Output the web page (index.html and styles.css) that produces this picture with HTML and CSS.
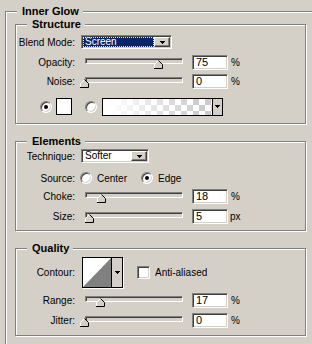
FILE: index.html
```html
<!DOCTYPE html>
<html>
<head>
    <meta charset="utf-8">
    <title>Inner Glow</title>
    <link rel="stylesheet" href="styles.css">
</head>
<body>
    <div class="outer">
        <div class="title">Inner Glow</div>

        <!-- Structure -->
        <div class="group structure">
            <div class="title">Structure</div>
            <div class="row row-blend">
                <span class="label">Blend Mode:</span>
                <div class="select select-blend">
                    <span class="value selected"><span class="focus">Screen</span></span>
                    <span class="btn"><svg width="5" height="3"><rect x="0" y="0" width="5" height="1"/><rect x="1" y="1" width="3" height="1"/><rect x="2" y="2" width="1" height="1"/></svg></span>
                </div>
            </div>
            <div class="row row-field r-opacity">
                <span class="label">Opacity:</span>
                <div class="slider">
                    <svg class="thumb" style="left:68px" width="9" height="9"><path d="M0.5 8.5V4.5L4.5 0.5L8.5 4.5V8.5Z" fill="#d4d0c8"/><path d="M0.5 8.5V4.5L4.5 0.5" stroke="#fff" fill="none"/><path d="M4.5 0.5L8.5 4.5V8.5H0" stroke="#000" fill="none"/></svg>
                </div>
                <div class="input">75</div><span class="unit">%</span>
            </div>
            <div class="row row-field r-noise">
                <span class="label">Noise:</span>
                <div class="slider">
                    <svg class="thumb" style="left:-6px" width="9" height="9"><path d="M0.5 8.5V4.5L4.5 0.5L8.5 4.5V8.5Z" fill="#d4d0c8"/><path d="M0.5 8.5V4.5L4.5 0.5" stroke="#fff" fill="none"/><path d="M4.5 0.5L8.5 4.5V8.5H0" stroke="#000" fill="none"/></svg>
                </div>
                <div class="input">0</div><span class="unit">%</span>
            </div>
            <div class="row row-color">
                <span class="radio checked first"></span>
                <span class="swatch"></span>
                <span class="radio second"></span>
                <div class="gradient">
                    <span class="preview"></span>
                    <span class="drop"><svg width="5" height="3"><rect x="0" y="0" width="5" height="1"/><rect x="1" y="1" width="3" height="1"/><rect x="2" y="2" width="1" height="1"/></svg></span>
                </div>
            </div>
        </div>

        <!-- Elements -->
        <div class="group elements">
            <div class="title">Elements</div>
            <div class="row row-blend r-technique">
                <span class="label">Technique:</span>
                <div class="select select-technique">
                    <span class="value">Softer</span>
                    <span class="btn"><svg width="5" height="3"><rect x="0" y="0" width="5" height="1"/><rect x="1" y="1" width="3" height="1"/><rect x="2" y="2" width="1" height="1"/></svg></span>
                </div>
            </div>
            <div class="row r-source">
                <span class="label">Source:</span>
                <span class="radio src-center"></span><span class="opt">Center</span>
                <span class="radio checked src-edge"></span><span class="opt">Edge</span>
            </div>
            <div class="row row-field r-choke">
                <span class="label">Choke:</span>
                <div class="slider">
                    <svg class="thumb" style="left:11px" width="9" height="9"><path d="M0.5 8.5V4.5L4.5 0.5L8.5 4.5V8.5Z" fill="#d4d0c8"/><path d="M0.5 8.5V4.5L4.5 0.5" stroke="#fff" fill="none"/><path d="M4.5 0.5L8.5 4.5V8.5H0" stroke="#000" fill="none"/></svg>
                </div>
                <div class="input">18</div><span class="unit">%</span>
            </div>
            <div class="row row-field r-size">
                <span class="label">Size:</span>
                <div class="slider">
                    <svg class="thumb" style="left:-1px" width="9" height="9"><path d="M0.5 8.5V4.5L4.5 0.5L8.5 4.5V8.5Z" fill="#d4d0c8"/><path d="M0.5 8.5V4.5L4.5 0.5" stroke="#fff" fill="none"/><path d="M4.5 0.5L8.5 4.5V8.5H0" stroke="#000" fill="none"/></svg>
                </div>
                <div class="input">5</div><span class="unit px">px</span>
            </div>
        </div>

        <!-- Quality -->
        <div class="group quality">
            <div class="title">Quality</div>
            <div class="row r-contour">
                <span class="label">Contour:</span>
                <div class="contour">
                    <svg class="curve" width="28" height="29"><rect width="28" height="29" fill="#fff"/><polygon points="0,29 28,0 28,29" fill="#808080"/></svg>
                    <span class="drop"><svg width="5" height="3"><rect x="0" y="0" width="5" height="1"/><rect x="1" y="1" width="3" height="1"/><rect x="2" y="2" width="1" height="1"/></svg></span>
                </div>
                <span class="checkbox"></span><span class="opt">Anti-aliased</span>
            </div>
            <div class="row row-field r-range">
                <span class="label">Range:</span>
                <div class="slider">
                    <svg class="thumb" style="left:10px" width="9" height="9"><path d="M0.5 8.5V4.5L4.5 0.5L8.5 4.5V8.5Z" fill="#d4d0c8"/><path d="M0.5 8.5V4.5L4.5 0.5" stroke="#fff" fill="none"/><path d="M4.5 0.5L8.5 4.5V8.5H0" stroke="#000" fill="none"/></svg>
                </div>
                <div class="input">17</div><span class="unit">%</span>
            </div>
            <div class="row row-field r-jitter">
                <span class="label">Jitter:</span>
                <div class="slider">
                    <svg class="thumb" style="left:-6px" width="9" height="9"><path d="M0.5 8.5V4.5L4.5 0.5L8.5 4.5V8.5Z" fill="#d4d0c8"/><path d="M0.5 8.5V4.5L4.5 0.5" stroke="#fff" fill="none"/><path d="M4.5 0.5L8.5 4.5V8.5H0" stroke="#000" fill="none"/></svg>
                </div>
                <div class="input">0</div><span class="unit">%</span>
            </div>
        </div>
    </div>
</body>
</html>
```

FILE: styles.css
```css
/* Classic dialog look for the layer style panel */
* {
    box-sizing: border-box;
}
body {
    margin: 0;
    height: 344px;
    overflow: hidden;
    background-color: #d4d0c8;
    font-family: "Liberation Sans", Arial, sans-serif;
    font-size: 10px;
    color: #000;
}
.outer {
    height: 333px;
    margin: 11px 0 0 5px;
    padding-left: 9px;
    border-top: 1px solid #808080;
    border-left: 1px solid #808080;
    box-shadow: inset 1px 1px 0 #fff;
}
.title {
    width: fit-content;
    height: 13px;
    line-height: 13px;
    margin: -7px 0 0 2px;
    padding: 0 4px 0 5px;
    background-color: #d4d0c8;
    font-size: 11px;
    font-weight: bold;
}
.group {
    width: 291px;
    border: 1px solid #808080;
    box-shadow: inset 1px 1px 0 #fff, 1px 1px 0 #fff;
}
.group .title {
    margin-left: 11px;
}
.structure {
    margin-top: 6px;
    padding-bottom: 7px;
}
.elements {
    margin-top: 17px;
    padding-bottom: 6px;
}
.quality {
    margin-top: 17px;
    padding-bottom: 7px;
}

/* rows */
.row {
    display: flex;
    align-items: center;
}
.label {
    flex: none;
    width: 60px;
    padding-right: 1px;
    text-align: right;
}
.row-blend {
    height: 14px;
    margin-top: 4px;
}
.r-technique {
    margin-top: 1px;
}
.row-field {
    height: 15px;
}
.r-opacity { margin-top: 6px; }
.r-noise { margin-top: 4px; }
.r-choke { margin-top: 5px; }
.r-size { margin-top: 5px; }
.r-range { margin-top: 5px; }
.r-jitter { margin-top: 5px; }
.row-color {
    height: 19px;
    margin-top: 8px;
}
.r-source {
    height: 12px;
    margin-top: 9px;
}
.r-contour {
    height: 31px;
    margin-top: 2px;
}

/* sunken controls */
.select,
.input,
.slider,
.checkbox {
    border: 1px solid;
    border-color: #808080 #fff #fff #808080;
    box-shadow: inset 1px 1px 0 #404040, inset -1px -1px 0 #d4d0c8;
}
.select {
    display: flex;
    height: 14px;
    margin-left: 5px;
    padding: 1px;
    background-color: #fff;
}
.select-blend {
    width: 91px;
}
.select-technique {
    width: 68px;
}
.select .value {
    flex: 1;
    padding-left: 2px;
    line-height: 10px;
}
.select .selected {
    padding: 0;
    background-color: #0a246a;
    color: #fff;
    outline: 1px dotted #f4e9a8;
    outline-offset: -1px;
}
.select .focus {
    padding-left: 2px;
}
.btn {
    display: flex;
    align-items: center;
    justify-content: center;
    width: 16px;
    background-color: #d4d0c8;
    border: 1px solid;
    border-color: #fff #404040 #404040 #fff;
    box-shadow: inset -1px -1px 0 #808080;
}
.slider {
    position: relative;
    align-self: flex-start;
    width: 98px;
    height: 6px;
    margin: 3px 9px 0;
    background-color: #d4d0c8;
}
.thumb {
    position: absolute;
    top: 1px;
}
.input {
    width: 36px;
    height: 15px;
    padding-left: 3px;
    line-height: 13px;
    background-color: #fff;
    font-size: 11px;
}
.unit {
    margin-left: 3px;
}
.unit.px {
    margin-left: 2px;
}

/* radios and swatches */
.radio {
    position: relative;
    flex: none;
    width: 12px;
    height: 12px;
    border-radius: 50%;
    border: 1px solid;
    border-color: #808080 #fff #fff #808080;
    box-shadow: inset 1px 1px 0 #404040, inset -1px -1px 0 #d4d0c8;
    background-color: #fff;
}
.radio.checked::after {
    content: "";
    position: absolute;
    left: 3px;
    top: 3px;
    width: 4px;
    height: 4px;
    border-radius: 50%;
    background-color: #000;
}
.radio.first {
    margin-left: 24px;
}
.radio.second {
    margin-left: 13px;
}
.swatch {
    width: 16px;
    height: 17px;
    margin-left: 4px;
    border: 1px solid #000;
    background-color: #fff;
}
.gradient {
    display: flex;
    width: 121px;
    height: 18px;
    margin-left: 5px;
    border: 1px solid #000;
}
.gradient .preview {
    flex: 1;
    background-image: linear-gradient(to right, #fff 5%, rgba(255, 255, 255, 0) 90%),
        repeating-conic-gradient(#cccccc 0 25%, #fff 0 50%);
    background-size: 100% 100%, 12px 12px;
}
.drop {
    display: flex;
    align-items: center;
    justify-content: center;
    width: 10px;
    border-left: 1px solid #000;
    background-color: #d4d0c8;
}
.src-center {
    margin-left: 4px;
}
.src-edge {
    margin-left: 14px;
}
.opt {
    margin-left: 5px;
}

/* contour picker */
.contour {
    display: flex;
    width: 41px;
    height: 31px;
    margin-left: 6px;
    border: 1px solid #000;
    box-shadow: 1px 1px 0 #fff;
}
.contour .drop {
    flex: 1;
    align-items: flex-start;
    padding-top: 13px;
}
.checkbox {
    width: 13px;
    height: 13px;
    margin-left: 14px;
    background-color: #fff;
}
```
